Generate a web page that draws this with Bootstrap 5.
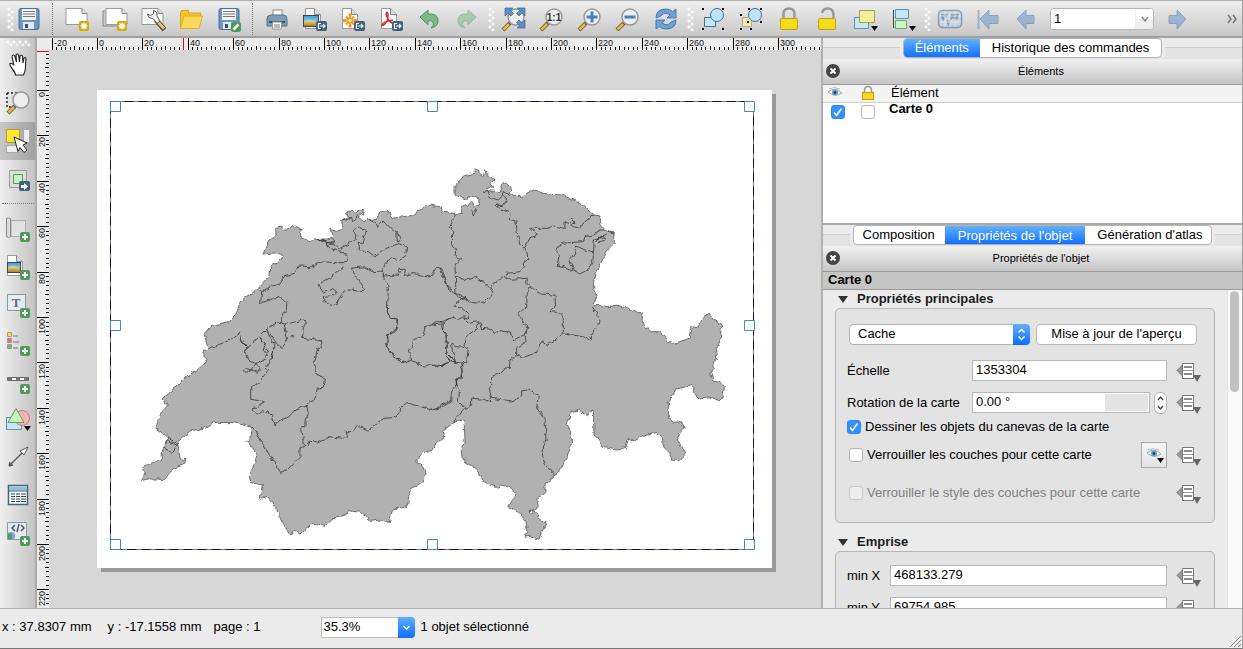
<!DOCTYPE html>
<html lang="fr">
<head>
<meta charset="utf-8">
<meta name="viewport" content="width=device-width, initial-scale=1">
<title>Composeur d'impression</title>
<link href="https://cdn.jsdelivr.net/npm/bootstrap@5.3.0/dist/css/bootstrap.min.css" rel="stylesheet">
<style>
body{font:13px/16px "Liberation Sans",Arial,sans-serif;color:#000;background:#ebebeb;height:100vh;overflow:hidden;border-right:1px solid #a0a0a0;border-bottom:1px solid #777}
button,input,select{font:inherit;color:inherit}
button{border:0;background:none;padding:0}
h2{font:inherit;margin:0}
.topbar{height:38px;border-top:1px solid #b0b0b0;border-bottom:2px solid #a0a0a0;background:linear-gradient(#eee,#c8c8c8)}
.tool{width:38px;height:34px;flex:none;display:flex;align-items:center;justify-content:center}
.ico{width:26px;height:26px;display:block;overflow:visible}
.faded{opacity:.5}
.grip{flex:none;width:9px;height:24px;background:radial-gradient(circle at 2px 2px,#fafafa 1px,transparent 2px) 2px 0/8px 6px repeat-y,radial-gradient(circle at 2px 2px,#f6f6f6 1px,transparent 2px) 5px 3px/8px 6px repeat-y}
.grip-start{margin:0 -4px 0 5px}
.grip-h{height:6px;width:24px;background:radial-gradient(circle at 2px 2px,#fafafa 1px,transparent 2px) 0 0/6px 8px repeat-x,radial-gradient(circle at 2px 2px,#f6f6f6 1px,transparent 2px) 3px 3px/6px 8px repeat-x;flex:none}
.sep{flex:none;width:10px;height:32px;border-left:1px dotted #777;margin-left:4px;margin-right:-4px}
.pagebox{width:104px;height:22px;margin:0 5px;border:1px solid #b4b4b4;border-radius:4px;background:#fff;overflow:hidden}
.pagebox input{border:0;min-width:0;flex:1;padding:0 3px;outline:0}
.pagebox button{width:18px;background:linear-gradient(#fff 50%,#efefef 50%);border-left:1px solid #eee}
.sidebar{width:37px;flex:none;background:linear-gradient(90deg,#efefef,#c4c4c4);border-right:2px solid #aaa;padding-top:2px}
.sidebar .tool{width:36px;height:38px}
.sidebar .tool.picked{background:linear-gradient(90deg,#c8c8c8,#a0a0a0)}
.sep-h{width:32px;border-top:1px dotted #777;margin:5px 0 6px;flex:none}
.ruler{background:#ececec;display:block;flex:none}
.ruler text{font-size:9px;fill:#111}
.workspace{background:#d7d7d7;min-width:0}
.paper{display:block;flex:none;margin:40px 0 0 48px}
.dock{width:421px;flex:none;border-left:2px solid #b0b0b0}
.tabstrip{height:21px;position:relative;background:linear-gradient(#ebebeb 9px,#cfcfcf 9px,#cfcfcf 10px,#e3e3e3 10px)}
.tabgroup{height:20px;border:1px solid #b4b4b4;border-radius:4px;background:#fff;overflow:hidden;box-shadow:3px 0 #ebebeb,-3px 0 #ebebeb}
.tabgroup button{padding:0 12px 1px 12px;height:19px}
.tabgroup button.on{color:#fff;background:linear-gradient(#60b0fc,#0f6dff);padding:0 11px 1px}
.dockhead{height:26px;font-size:11px;background:linear-gradient(#f0f0f0,#c6c6c6);border-bottom:1px solid #999;flex:none;padding-bottom:2px}
.dockhead svg{width:14px;height:14px;display:block}
.items{height:140px;flex:none;background:#fff;border-bottom:2px solid #aaa}
.items table{width:100%;table-layout:fixed;border-collapse:collapse}
.items th{background:#f4f4f4;height:17px;border-bottom:1px solid #ccc;font-weight:400;padding:0;line-height:16px}
.items td{padding:0;height:20px}
.items td:last-child{vertical-align:top;padding-left:2px;line-height:12px}
.tick{appearance:none;width:14px;height:14px;margin:0;border:1px solid #b4b4b4;border-radius:3px;background:#fff;flex:none;display:block}
.tick:checked{border-color:#2b87fb;background:#3391fd url("data:image/svg+xml,%3Csvg xmlns='http://www.w3.org/2000/svg' viewBox='0 0 12 12'%3E%3Cpath d='M2 6.500l2.500 3 5-7' fill='none' stroke='%23fff' stroke-width='1.600'/%3E%3C/svg%3E")}
.tick:disabled{background:#eee;border-color:#c8c8c8}
.objname{height:18px;background:#c6c6c6;border-bottom:1px solid #999;line-height:16px;padding-left:5px;flex:none}
.props{min-height:0;overflow:hidden}
.propcol{padding:0 12px;min-width:0}
.secthead{height:18px;font-weight:700;color:#1c1c1c;gap:8px;padding-left:2px}
.secthead svg{width:12px;height:8px}
.secthead+.box{margin-bottom:10px}
.box{border:1px solid #b6b6b6;border-radius:5px;background:#e3e3e3;padding:15px 12px 19px 11px}
.rowline{display:flex;align-items:center;height:21px}
.rowline label{line-height:16px}
.lab{width:125px;flex:none}
.field{border:1px solid #b8b8b8;background:#fff;height:21px;min-width:0;flex:1;padding:0 3px 2px;outline:0;border-radius:0}
.field-bar{background:linear-gradient(90deg,#fff 75%,#e3e3e3 75%);box-shadow:inset 0 0 0 1px #fff}
.ddbtn{width:26px;height:24px;margin-left:9px;flex:none}
.ddbtn svg{width:26px;height:24px;display:block}
.combo{position:relative;height:21px}
.combo select{appearance:none;width:100%;height:21px;border:1px solid #b4b4b4;border-radius:4px;background:#fff;padding:0 8px 2px}
.combo .cap{position:absolute;right:0;top:0;width:17px;height:21px;border-radius:0 4px 4px 0;background:linear-gradient(#5fb0fc,#0f6dff);pointer-events:none}
.combo .cap svg{display:block;width:17px;height:21px}
.whitebtn{height:21px;width:161px;border:1px solid #b8b8b8;border-radius:4px;background:#fff;margin:0 5px 0 6px;padding-bottom:2px}
.spin{width:13px;height:22px;margin-left:4px;border:1px solid #b4b4b4;border-radius:6px;background:#fff;flex:none}
.spin svg{display:block;width:11px;height:20px}
.eyebtn{width:26px;height:26px;border:1px solid #aaa;background:linear-gradient(#f6f6f6,#e4e4e4);flex:none}
.eyebtn svg{width:24px;height:24px;display:block}
.track{width:15px;flex:none;background:#fafafa;border-left:1px solid #e4e4e4;padding:1px 2px 0}
.thumb{width:9px;height:101px;border-radius:5px;background:#c1c1c1}
.status{height:40px;flex:none;border-top:1px solid #b0b0b0;padding:0 0 3px 2px;position:relative}
.zoombox{width:94px;margin:0 6px 0 60px}
.zoombox select{border-radius:0 4px 4px 0;border-color:#bbb;padding:0 2px}
.sizer{position:absolute;right:0;bottom:0;width:14px;height:14px}
</style>
</head>
<body class="d-flex flex-column">

<svg width="0" height="0" class="position-absolute" aria-hidden="true">
<defs>
<linearGradient id="sky" x2="0" y2="1"><stop offset="0" stop-color="#2f9de0"/><stop offset="1" stop-color="#d8f0fb"/></linearGradient>
<linearGradient id="sand" x2="0" y2="1"><stop offset="0" stop-color="#f3dc8a"/><stop offset="1" stop-color="#a8802c"/></linearGradient>
<g id="badgeNew"><rect x="15" y="15" width="10" height="10" rx="2" fill="#d6a900"/><path d="M20 16.500v7M16.500 20h7M17.500 17.500l5 5M22.500 17.500l-5 5" stroke="#fff" stroke-width="1.300"/></g>
<g id="badgeAdd"><rect x="15" y="16" width="10" height="10" rx="2" fill="#4f9a58"/><path d="M20 18v6M17 21h6" stroke="#fff" stroke-width="2"/></g>
<g id="badgeOut"><rect x="14" y="15" width="11" height="10" rx="2" fill="#3d637f"/><path d="M19 17.500h-2.500v5H19M18 20h5M21 18l2 2-2 2" fill="none" stroke="#fff" stroke-width="1.200"/></g>
<g id="sheet"><path d="M2 2.500h16l5 5v11H2z" fill="#fff" stroke="#999"/><path d="M18 2.500v5h5" fill="#ddd" stroke="#888"/></g>
<g id="doc"><path d="M5.500 2.500h9l6 6v14h-15z" fill="#fff" stroke="#999"/><path d="M14.500 2.500v6h6" fill="#ddd" stroke="#888"/></g>
<g id="lens"><path d="M9 17l-7 7" stroke="#555" stroke-width="4"/><path d="M8 18l-5.500 5.500" stroke="#f2b92a" stroke-width="2.500"/><circle cx="15" cy="11" r="8" fill="#eee" stroke="#999" stroke-width="1.500"/></g>
<symbol id="save" viewBox="0 0 26 26"><rect x="3" y="2.500" width="20" height="21" rx="2" fill="#6d96c4" stroke="#4a6c96"/><rect x="6" y="3" width="14" height="11" fill="#f4f4f4"/><path d="M7 5.500h12M7 8h12M7 10.500h12" stroke="#777"/><rect x="7" y="16" width="11" height="7" fill="#e4e8ec"/><rect x="9" y="18" width="3" height="4" fill="#37506e"/></symbol>
<symbol id="saveas" viewBox="0 0 26 26"><use href="#save"/><rect x="15" y="16" width="10" height="10" rx="2" fill="#4f9a58"/><path d="M17.500 23.500l5-5" stroke="#fff" stroke-width="2.500"/></symbol>
<symbol id="new" viewBox="0 0 26 26"><use href="#sheet"/><use href="#badgeNew"/></symbol>
<symbol id="dup" viewBox="0 0 26 26"><path d="M1 5h19v15H1z" fill="#ccc" stroke="#888"/><use href="#sheet" x="2"/><use href="#badgeNew"/></symbol>
<symbol id="manage" viewBox="0 0 26 26"><use href="#sheet"/><path d="M16 14l8.500 9.500" stroke="#444" stroke-width="5"/><path d="M17 15l7 7.500" stroke="#e2c56a" stroke-width="3"/><path d="M13.500 4.500q4 1 3.500 5.500l3 5-3 2.500-4-5q-5 0-5.500-4.500l3 1.500 3-2z" fill="#f2f2f2" stroke="#555"/></symbol>
<symbol id="open" viewBox="0 0 26 26"><path d="M2.500 23V6h1V4.500h7V7h12v5" fill="#f0c330" stroke="#d8a51c"/><path d="M2.500 22.500L6 10h18.500L21 22.500z" fill="#fbd95a" stroke="#dfae25"/></symbol>
<symbol id="print" viewBox="0 0 26 26"><rect x="9" y="4" width="9" height="8" fill="#fff" stroke="#888"/><path d="M3 13q0-4 4-4h12q4 0 4 4v7H3z" fill="#7b9cb6" stroke="#4f7089"/><path d="M5 16h16" stroke="#35536b" stroke-width="2"/><path d="M8.500 16h9v7h-9z" fill="#fff" stroke="#999"/><path d="M10 19h6M10 21h6" stroke="#777"/></symbol>
<symbol id="outimg" viewBox="0 0 26 26"><use href="#doc" x="-2"/><rect x="1.500" y="9.500" width="15" height="11" fill="url(#sky)" stroke="#445"/><path d="M2 15q8-2 14 1v4H2z" fill="url(#sand)"/><use href="#badgeOut"/></symbol>
<symbol id="outsvg" viewBox="0 0 26 26"><use href="#doc" x="-3"/><g stroke="#f29a1d" stroke-width="2"><path d="M10 9v11M4.500 14.500h11M6 10.500l8 8M14 10.500l-8 8"/></g><circle cx="10" cy="14.500" r="2" fill="#fff" stroke="#f29a1d"/><g fill="#f29a1d"><circle cx="10" cy="9" r="1.700"/><circle cx="10" cy="20" r="1.700"/><circle cx="4.500" cy="14.500" r="1.700"/><circle cx="15.500" cy="14.500" r="1.700"/></g><use href="#badgeOut"/></symbol>
<symbol id="outpdf" viewBox="0 0 26 26"><use href="#doc" x="-2"/><path d="M9 6q-2 2 1 7 3 5 7 4M10 13q-3 7-6 6 0-3 11-5M9 6q2 1 0 10" fill="none" stroke="#d0302b" stroke-width="1.500"/><use href="#badgeOut"/></symbol>
<symbol id="undo" viewBox="0 0 26 26"><path d="M4 11l8-7v4q11-1 10 8-1 5-7 6 4-4 2-6t-5-1v4z" fill="#80b58a" stroke="#4f9560"/></symbol>
<symbol id="redo" viewBox="0 0 26 26"><path d="M22 11l-8-7v4q-11-1-10 8 1 5 7 6-4-4-2-6t5-1v4z" fill="#80b58a" stroke="#4f9560"/></symbol>
<symbol id="zfull" viewBox="0 0 26 26"><use href="#lens"/><g fill="#5e8dc0" stroke="#3b6796" stroke-width=".7"><path d="M4 2h8L9.500 4.500l3 3-2.500 2.500-3-3L4 10z"/><path d="M24 2h-8l2.500 2.500-3 3L18 10l3-3 3 3z"/><path d="M24 22h-8l2.500-2.500-3-3L18 14l3 3 3-3z"/></g></symbol>
<symbol id="zone" viewBox="0 0 26 26"><use href="#lens"/><text x="15" y="15" font-size="10" font-weight="700" text-anchor="middle" fill="#333">1:1</text></symbol>
<symbol id="zin" viewBox="0 0 26 26"><use href="#lens"/><path d="M15 5.500v11M9.500 11h11" stroke="#4b81b8" stroke-width="3"/></symbol>
<symbol id="zout" viewBox="0 0 26 26"><use href="#lens"/><path d="M9.500 11h11" stroke="#4b81b8" stroke-width="3"/></symbol>
<symbol id="refresh" viewBox="0 0 26 26"><path d="M3 12Q3 3 13 3q4 0 6.500 2.500L23 3v9h-9l3-3q-6-4-9 1z" fill="#6fa0d6" stroke="#4679b2"/><path d="M23 14q0 9-10 9-4 0-6.500-2.500L3 23v-9h9l-3 3q6 4 9-1z" fill="#6fa0d6" stroke="#4679b2"/></symbol>
<symbol id="group" viewBox="0 0 26 26"><path d="M4.500 11.500h11v9h-11z" fill="#c8e6f8" stroke="#3c7396"/><circle cx="17" cy="9" r="6.500" fill="#c0e2f6" stroke="#3c7396"/><path d="M2 2h2v2H2zM22 2h2v2h-2zM2 22h2v2H2zM22 22h2v2h-2z"/></symbol>
<symbol id="ungroup" viewBox="0 0 26 26"><path d="M4.500 11.500h9v9h-9z" fill="#f2ee9c" stroke="#aaa"/><circle cx="17" cy="9" r="6.500" fill="#c0e2f6" stroke="#3c7396"/><path d="M10 2h2v2h-2zM22 2h2v2h-2zM2 8h2v2H2zM9 15h2v2H9zM22 15h2v2h-2zM2 22h2v2H2zM12 22h2v2h-2z"/></symbol>
<symbol id="lock" viewBox="0 0 26 26"><path d="M7.500 13V8q0-5.500 5.500-5.500T18.500 8v5" fill="none" stroke="#999" stroke-width="2.500"/><rect x="4.500" y="12.500" width="17" height="11" rx="1" fill="#f2dc1c" stroke="#c69d10"/></symbol>
<symbol id="unlock" viewBox="0 0 26 26"><path d="M8 7q1-4.500 6-4.500t5.500 5.500v5" fill="none" stroke="#999" stroke-width="2.500"/><rect x="4.500" y="12.500" width="17" height="11" rx="1" fill="#f2dc1c" stroke="#c69d10"/></symbol>
<symbol id="raise" viewBox="0 0 26 26"><path d="M2.500 11.500h14v11h-14z" fill="#c8e6f8" stroke="#5b93b4"/><path d="M7.500 4.500h15v12h-15z" fill="#f2ee9c" stroke="#aaa04a"/><path d="M19 20h7l-3.500 5z"/></symbol>
<symbol id="align" viewBox="0 0 26 26"><path d="M3.500 4v18" stroke="#444"/><path d="M5.500 3.500h13v9h-13z" fill="#c8e6f8" stroke="#5b93b4"/><path d="M5.500 14.500h11v8h-11z" fill="#c9f8c4" stroke="#68ad66"/><path d="M19 20h7l-3.500 5z"/></symbol>
<symbol id="atlas" viewBox="0 0 26 26"><rect x="1.500" y="4.500" width="23" height="17" rx="4" fill="#b9cfe8" stroke="#2f5c90" stroke-width="1.500"/><path d="M4 8h7l-1 3H8l-1 4-3-3zM13 8h9l-1 5-3 1-2-2-3 3zM10 14l3 1-1 5-2-2z" fill="#34587f"/><path d="M8 5v16M13 5v16M18 5v16M2 10h22M2 16h22" stroke="#fff" stroke-width=".7"/></symbol>
<symbol id="first" viewBox="0 0 26 26"><path d="M3.500 4v19" stroke="#5d88b7" stroke-width="2"/><path d="M5 13l9-9v5.500h9v8h-9V23z" fill="#5f90c8" stroke="#3d6ca1"/></symbol>
<symbol id="prev" viewBox="0 0 26 26"><path d="M4 13l9-9v5.500h8v8h-8V23z" fill="#5f90c8" stroke="#3d6ca1"/></symbol>
<symbol id="next" viewBox="0 0 26 26"><path d="M21 13l-9-9v5.500H4v8h8V23z" fill="#5f90c8" stroke="#3d6ca1"/></symbol>
<symbol id="hand" viewBox="0 0 26 26"><path d="M9 19Q4 13 5 11.500q2-1 4 2L7 5q0-2 1.500-2T10 5l1.500 5L11 3q1-2 2.500 0l1 7 .5-6q1.500-1.500 2.500 0l.5 7 1-5q2-1 2 1-.5 4-.5 8t-2 8h-8q0-2-2-4z" fill="#fff" stroke="#222" stroke-width="1.100"/></symbol>
<symbol id="zoomsel" viewBox="0 0 26 26"><path d="M2 3h14M2 3v14h14" fill="none" stroke="#222" stroke-width="1.500" stroke-dasharray="2 2"/><g transform="translate(1 -1)"><use href="#lens"/></g></symbol>
<symbol id="pick" viewBox="0 0 26 26"><path d="M18.500 1.500h6v13h-6zM1.500 17.500h13v7h-13z" fill="#eee" stroke="#aaa"/><path d="M1.500 1.500h13v13h-13z" fill="#fde735" stroke="#b89e22"/><path d="M9 9l13 6-4 2 4 5-3 2.500-4-5-2 4z" fill="#fff" stroke="#222"/></symbol>
<symbol id="movec" viewBox="0 0 26 26"><path d="M4.500 4.500h17v17h-17z" fill="#ddd" stroke="#999"/><path d="M8.500 8.500h9v9h-9z" fill="#c6f5c3" stroke="#5b9c5b"/><rect x="14" y="15" width="11" height="10" rx="2" fill="#3d637f"/><path d="M16 19h3v-2l4 3.500-4 3.500v-2h-3z" fill="#fff"/></symbol>
<symbol id="addmap" viewBox="0 0 26 26"><path d="M6 4.500h14.500v16H6z" fill="#e2e2e2" stroke="#aaa"/><path d="M1.500 2.500q2-1 4 0v18q-2 2-4 0z" fill="#ddd" stroke="#888"/><use href="#badgeAdd"/></symbol>
<symbol id="addimg" viewBox="0 0 26 26"><use href="#doc" x="-3" y="-1"/><rect x="2.500" y="8.500" width="13" height="10" fill="url(#sky)" stroke="#445"/><path d="M3 13q7-2 12 1v4H3z" fill="url(#sand)"/><use href="#badgeAdd"/></symbol>
<symbol id="addtxt" viewBox="0 0 26 26"><path d="M2.500 2.500h18v16h-18z" fill="#e4ebf2" stroke="#899"/><text x="11" y="15" font-size="13" font-weight="700" font-family="Liberation Serif,serif" text-anchor="middle" fill="#667">T</text><use href="#badgeAdd"/></symbol>
<symbol id="addleg" viewBox="0 0 26 26"><g stroke="#999"><path d="M2.500 2.500h4v4h-4z" fill="#f6e71c"/><path d="M2.500 8.500h4v4h-4z" fill="#e66"/><path d="M2.500 14.500h4v4h-4z" fill="#7b7"/></g><path d="M8 6h5M8 12h6M8 18h5" stroke="#999" stroke-width="1.500"/><use href="#badgeAdd"/></symbol>
<symbol id="addscale" viewBox="0 0 26 26"><path d="M2.500 9.500h21v3h-21z" fill="#fff" stroke="#666"/><path d="M3 11h4M11 11h4M19 11h4" stroke="#777" stroke-width="3"/><use href="#badgeAdd"/></symbol>
<symbol id="addshape" viewBox="0 0 26 26"><path d="M1.500 11.500h15v12h-15z" fill="#c8e6fb" stroke="#5b93b4"/><circle cx="17" cy="12" r="7.500" fill="#f8b3b3" stroke="#cf7777"/><path d="M11 2.500l8 14H3z" fill="#c4f5bc" stroke="#5ba35b"/><path d="M19 20h7l-3.500 5z"/></symbol>
<symbol id="addarrow" viewBox="0 0 26 26"><path d="M4 22L17 9M4 22l1-4M4 22l4-1" stroke="#555" stroke-width="1.300"/><path d="M23 3l-8 4 4 4z" fill="#fff" stroke="#555"/></symbol>
<symbol id="addtable" viewBox="0 0 26 26"><rect x="3.500" y="3.500" width="19" height="19" fill="#f4f8fa" stroke="#44657c" stroke-width="1.500"/><path d="M4 6.500h18" stroke="#8fc0de" stroke-width="4"/><path d="M4 9h18" stroke="#44657c"/><path d="M6 12h4M11 12h4M16 12h5M6 14.500h4M11 14.500h4M16 14.500h5M6 17h4M11 17h4M16 17h5M6 19.500h4M11 19.500h4M16 19.500h5" stroke="#345"/></symbol>
<symbol id="addhtml" viewBox="0 0 26 26"><path d="M2.500 2.500h19v17h-19z" fill="#e4ebf2" stroke="#899"/><path d="M10 5L7 8l3 3M16 5l3 3-3 3M14 4l-2 8" fill="none" stroke="#445" stroke-width="1.300"/><circle cx="6" cy="16" r="4" fill="#7aa3dd"/><path d="M3 14q4-2 4 2t-2 4q-3-2-2-6z" fill="#4ba04d"/><use href="#badgeAdd"/></symbol>
<symbol id="eye" viewBox="0 0 16 12"><path d="M1 5q7-6 14 1-7 5-14-1z" fill="#eef3f7" stroke="#9aa" /><circle cx="8" cy="5.500" r="3" fill="#6b9dc9"/><circle cx="8" cy="5.500" r="1.300" fill="#234"/><path d="M2 2q5-3 11 0" fill="none" stroke="#bbb"/></symbol>
<symbol id="minilock" viewBox="0 0 14 16"><path d="M3.500 8V5.500q0-4 3.500-4t3.500 4V8" fill="none" stroke="#999" stroke-width="1.600"/><rect x="1.500" y="7.500" width="11" height="7" fill="#f2dc1c" stroke="#c69d10"/></symbol>
<symbol id="ddef" viewBox="0 0 26 24"><path d="M6.500 6L1 11.500 6.500 17z" fill="#999" stroke="#777"/><path d="M6.500 4.500h11v15h-11z" fill="#fff" stroke="#777"/><path d="M8 8h8M8 15h8" stroke="#666" stroke-width="1.500"/><path d="M7 11.500h10" stroke="#999"/><path d="M17 16h8l-4 7z" fill="#666"/></symbol>
<symbol id="closer" viewBox="0 0 14 14"><circle cx="7" cy="7" r="7" fill="#444"/><path d="M4.500 4.500l5 5M9.500 4.500l-5 5" stroke="#fff" stroke-width="2"/></symbol>
<symbol id="tri" viewBox="0 0 12 8"><path d="M1 1h10L6 8z" fill="#333"/></symbol>
<filter id="coast" x="-2%" y="-2%" width="104%" height="104%" color-interpolation-filters="sRGB"><feTurbulence type="fractalNoise" baseFrequency=".06" numOctaves="2" seed="4"/><feDisplacementMap in="SourceGraphic" scale="14" xChannelSelector="R" yChannelSelector="G"/></filter>
</defs>
</svg>

<header class="topbar d-flex align-items-center flex-shrink-0" role="toolbar">
  <span class="grip grip-start"></span>
  <button class="tool" aria-label="Enregistrer"><svg class="ico"><use href="#save"/></svg></button>
  <span class="sep"></span>
  <button class="tool" aria-label="Nouveau"><svg class="ico"><use href="#new"/></svg></button>
  <button class="tool" aria-label="Dupliquer"><svg class="ico"><use href="#dup"/></svg></button>
  <button class="tool" aria-label="Gestionnaire"><svg class="ico"><use href="#manage"/></svg></button>
  <button class="tool" aria-label="Ouvrir"><svg class="ico"><use href="#open"/></svg></button>
  <button class="tool" aria-label="Enregistrer sous"><svg class="ico"><use href="#saveas"/></svg></button>
  <span class="sep"></span>
  <button class="tool" aria-label="Imprimer"><svg class="ico"><use href="#print"/></svg></button>
  <button class="tool" aria-label="Exporter image"><svg class="ico"><use href="#outimg"/></svg></button>
  <button class="tool" aria-label="Exporter SVG"><svg class="ico"><use href="#outsvg"/></svg></button>
  <button class="tool" aria-label="Exporter PDF"><svg class="ico"><use href="#outpdf"/></svg></button>
  <button class="tool" aria-label="Annuler"><svg class="ico"><use href="#undo"/></svg></button>
  <button class="tool faded" aria-label="Rétablir"><svg class="ico"><use href="#redo"/></svg></button>
  <span class="grip"></span>
  <button class="tool" aria-label="Zoom étendu"><svg class="ico"><use href="#zfull"/></svg></button>
  <button class="tool" aria-label="Zoom réel"><svg class="ico"><use href="#zone"/></svg></button>
  <button class="tool" aria-label="Zoom avant"><svg class="ico"><use href="#zin"/></svg></button>
  <button class="tool" aria-label="Zoom arrière"><svg class="ico"><use href="#zout"/></svg></button>
  <button class="tool" aria-label="Rafraîchir"><svg class="ico"><use href="#refresh"/></svg></button>
  <span class="grip"></span>
  <button class="tool" aria-label="Grouper"><svg class="ico"><use href="#group"/></svg></button>
  <button class="tool" aria-label="Dégrouper"><svg class="ico"><use href="#ungroup"/></svg></button>
  <button class="tool" aria-label="Verrouiller"><svg class="ico"><use href="#lock"/></svg></button>
  <button class="tool" aria-label="Déverrouiller"><svg class="ico"><use href="#unlock"/></svg></button>
  <button class="tool" aria-label="Relever"><svg class="ico"><use href="#raise"/></svg></button>
  <button class="tool" aria-label="Aligner"><svg class="ico"><use href="#align"/></svg></button>
  <span class="grip"></span>
  <button class="tool faded" aria-label="Atlas"><svg class="ico"><use href="#atlas"/></svg></button>
  <button class="tool faded" aria-label="Première page"><svg class="ico"><use href="#first"/></svg></button>
  <button class="tool faded" aria-label="Page précédente"><svg class="ico"><use href="#prev"/></svg></button>
  <div class="pagebox d-flex flex-shrink-0"><input type="text" value="1" aria-label="Page d'atlas"><button aria-label="Choisir la page"><svg width="10" height="8" viewBox="0 0 10 8"><path d="M2 2l3 4 3-4" fill="none" stroke="#888" stroke-width="1.500"/></svg></button></div>
  <button class="tool faded" aria-label="Page suivante"><svg class="ico"><use href="#next"/></svg></button>
  <button class="ms-auto pe-1" aria-label="Plus d'outils"><svg width="12" height="10" viewBox="0 0 12 10" class="d-block"><path d="M2 1l3 4-3 4M7 1l3 4-3 4" fill="none" stroke="#777" stroke-width="1.500"/></svg></button>
</header>

<main class="d-flex flex-fill" style="min-height:0">
  <nav class="sidebar d-flex flex-column align-items-center overflow-hidden" aria-label="Outils">
    <span class="grip-h"></span>
    <button class="tool" aria-label="Déplacer"><svg class="ico"><use href="#hand"/></svg></button>
    <button class="tool" aria-label="Zoom"><svg class="ico"><use href="#zoomsel"/></svg></button>
    <button class="tool picked" aria-label="Sélectionner"><svg class="ico"><use href="#pick"/></svg></button>
    <button class="tool" aria-label="Déplacer le contenu"><svg class="ico"><use href="#movec"/></svg></button>
    <span class="sep-h"></span>
    <button class="tool" aria-label="Ajouter carte"><svg class="ico"><use href="#addmap"/></svg></button>
    <button class="tool" aria-label="Ajouter image"><svg class="ico"><use href="#addimg"/></svg></button>
    <button class="tool" aria-label="Ajouter étiquette"><svg class="ico"><use href="#addtxt"/></svg></button>
    <button class="tool" aria-label="Ajouter légende"><svg class="ico"><use href="#addleg"/></svg></button>
    <button class="tool" aria-label="Ajouter échelle"><svg class="ico"><use href="#addscale"/></svg></button>
    <button class="tool" aria-label="Ajouter forme"><svg class="ico"><use href="#addshape"/></svg></button>
    <button class="tool" aria-label="Ajouter flèche"><svg class="ico"><use href="#addarrow"/></svg></button>
    <button class="tool" aria-label="Ajouter table"><svg class="ico"><use href="#addtable"/></svg></button>
    <button class="tool" aria-label="Ajouter HTML"><svg class="ico"><use href="#addhtml"/></svg></button>
  </nav>

  <section class="workspace d-flex flex-column flex-fill overflow-hidden">
    <svg id="hruler" class="ruler" width="100%" height="12"></svg>
    <div class="d-flex flex-fill overflow-hidden">
      <svg id="vruler" class="ruler" width="12" height="100%"></svg>
      <svg class="paper" width="680" height="483" viewBox="97 90 680 483" role="img" aria-label="Carte de la Suisse">
        <path d="M101 94h675v478H101z" fill="#999"/>
        <path d="M97 90h675v478H97z" fill="#fff"/>
        <g transform="scale(.33333)" stroke="#555" stroke-width="2.400" stroke-linejoin="round" fill="none" filter="url(#coast)">
          <path fill="#b1b1b1" d="M425 1445L435 1417 428 1400 450 1390 485 1382 483 1360 495 1335 508 1315 468 1285 475 1255 488 1233 502 1218 487 1195 520 1170 553 1135 595 1107 620 1085 612 1072 612 1055 623 1045 613 1000 633 977 662 970 685 965 705 945 720 910 735 895 760 880 785 855 810 828 812 798 838 785 852 770 840 758 787 762 800 738 810 720 828 708 827 685 845 681 850 688 870 685 885 678 905 687 898 712 930 723 960 717 982 717 1000 708 992 687 1010 695 1028 685 1025 660 1045 650 1036 640 1050 633 1070 640 1075 630 1090 628 1088 642 1075 650 1092 662 1130 655 1142 635 1170 635 1178 655 1210 650 1245 645 1252 633 1265 628 1288 615 1320 620 1330 637 1365 640 1385 637 1385 620 1405 615 1415 605 1424 610 1422 622 1438 615 1435 592 1418 590 1400 598 1365 585 1365 560 1378 545 1390 528 1422 520 1423 507 1440 512 1441 528 1448 528 1455 512 1468 528 1474 536 1485 538 1470 550 1478 565 1465 562 1462 572 1505 575 1502 555 1512 547 1538 565 1525 578 1542 590 1565 588 1595 572 1650 583 1685 585 1740 608 1780 645 1800 648 1803 675 1817 692 1840 695 1838 712 1847 730 1830 745 1820 755 1810 778 1788 820 1780 850 1782 870 1790 890 1777 918 1802 916 1824 920 1850 916 1885 925 1910 938 1930 938 1926 960 1932 980 1955 995 1980 995 2005 1023 2025 1030 2068 1015 2072 980 2095 983 2110 950 2128 940 2140 960 2165 972 2160 1025 2148 1055 2150 1075 2138 1095 2145 1105 2132 1120 2140 1145 2160 1145 2173 1160 2168 1195 2160 1203 2135 1193 2100 1197 2080 1177 2082 1160 2075 1153 2052 1162 2025 1168 2020 1185 2005 1205 2005 1255 2020 1267 2045 1265 2052 1285 2040 1298 2032 1320 2058 1360 2042 1378 2012 1382 2010 1360 1990 1340 1987 1310 1970 1298 1940 1302 1900 1320 1885 1315 1878 1342 1850 1350 1810 1342 1798 1318 1782 1305 1780 1230 1768 1238 1760 1252 1742 1230 1710 1235 1708 1255 1698 1270 1712 1295 1715 1330 1700 1375 1675 1418 1665 1425 1635 1452 1635 1480 1610 1495 1615 1520 1605 1535 1618 1555 1640 1572 1625 1595 1618 1618 1590 1608 1575 1612 1583 1595 1578 1565 1560 1540 1525 1520 1548 1485 1535 1465 1505 1455 1493 1463 1455 1450 1440 1425 1425 1402 1388 1380 1383 1355 1395 1330 1394 1295 1392 1265 1380 1260 1362 1268 1328 1292 1335 1308 1305 1335 1295 1352 1268 1355 1247 1380 1268 1400 1278 1420 1272 1445 1230 1467 1228 1500 1215 1522 1180 1527 1167 1567 1145 1560 1125 1562 1108 1565 1102 1550 1080 1537 1045 1532 1040 1545 1010 1550 975 1580 955 1572 938 1570 920 1584 900 1602 885 1593 868 1602 855 1580 845 1560 832 1535 830 1522 800 1487 780 1498 787 1455 752 1448 748 1430 762 1390 775 1365 740 1323 752 1315 758 1283 700 1268 640 1267 610 1285 570 1293 530 1325 538 1355 540 1375 550 1382 558 1377 555 1392 525 1405 510 1417 495 1440 475 1437 450 1437z"/>
          <g transform="translate(720 480)" stroke="#333">
            <path d="M232 237l23 8 23-10 5 5-5 10h-21zM245 240l17 15 8 10 15 5 23 5 17 20-10 13-35 0-30-3-35 15-37-2-13 22-30 7-20 28-20 3-30 17-8-7"/>
            <path d="M257 250l28 5 15 10 25-13 20-12 3-14-6-10 3-9 17-3 16 8-8 38-15 0v22l30 3 20 15 35-25 35-15 25 12-5 28-15 10-25-7-20 17-7 23-28 2-28-15-37 5 5 20 15 10 17 30-2 10-40-5-18 3-17 27-5 17-15-5-23-7-2-13 25-2 15-15-13-10-25 15-18-25 33-20 30-23 15-17"/>
            <path d="M385 178l23 12 4 12 20-19 23 25 15 7 2 30 13-3-5-17-10-3M428 333l4 22 13 30-3 70 13 20 17 5-7 30-23 20-2 30 15 20 20 18M428 348l47-3 5-20 15 5v17l25-10 40 13 10 0 20-28 15 3 20 55 23 23M308 180l27-8 3 16 17-23"/>
            <path d="M65 395l-3 35 30-12 28-8 20 20v20l-15 10v30M12 575l68-67 30-20 25 5 55-13 10 5-10 15-2 35 52 7 5 18-15 5 5 10M133 493l10 47-18 25-15-15-30-42M60 532l15 18-3 15 10 5-7 30M80 512l15 33 10 5-5 25-8 25M0 515l5 30 17 17-10 13"/><circle cx="157" cy="530" r="4"/>
          </g>
          <g transform="translate(1320 480)" stroke="#333">
            <path d="M48 162L28 200 38 215 37 260 50 270 48 292 62 295 45 318 48 400 75 410M0 325L30 395 48 402 55 412 75 413 85 425 110 430 135 425 155 400 155 385M48 348L75 360 110 352 130 365 150 385 160 370 195 350 200 340 240 335 252 322 250 310 263 298 262 280 250 265 240 255 235 235 232 225 228 182 208 178 210 160 180 145 168 135 190 137 200 120 188 105M130 95L145 92 150 112 175 120 185 110 190 95 210 108"/>
            <path d="M250 265L268 235 292 225 272 205 325 205 340 198 375 205 375 187 385 190 395 177 405 190 393 190 402 200 418 205 435 185 460 165M520 220L500 210 475 210 470 222 435 230 430 245 365 250 348 270 356 290 352 318 375 325 400 332 420 342 445 328 458 310 463 240 500 222M468 238L490 228 495 240 475 248zM472 232L500 236M410 258L403 280 390 300 402 332M410 258L435 270 460 275M95 150L100 168 110 145"/>
            <path d="M195 350L205 358 262 355 260 370 272 380 262 400 260 440 235 460 250 490 263 500 258 522 220 540 210 515 195 515 180 512 162 520 155 508 125 505 118 485M272 380L300 402 345 405 347 440 330 455 362 458 370 475 370 520 345 540 320 555 305 545 285 580 250 592 230 585 230 565 258 545 255 520M370 522L430 530 450 540 462 510 482 482 457 440M230 585L210 600 208 625 190 628 180 640 155 650 155 675 148 685 155 715"/>
            <path d="M75 413L60 418 42 440 65 445 88 465 85 475 72 470 55 478 40 472 20 480 0 485M70 475L85 490 118 485 105 510 80 528 75 535 72 558 85 565 80 608 50 608 22 580 22 520 8 515 5 495M35 552L50 560 72 562M35 555L38 580 50 608M62 610L68 650 50 655 50 680M0 620L30 605 50 608"/>
          </g>
          <g transform="translate(390 930)" stroke="#333">
            <path d="M233 115L265 105 300 90 330 67 335 90 345 105 355 112M342 125L360 155 385 160 405 148 412 135 403 125 405 100 390 82M432 100L430 130 415 160 408 170 415 180 385 220 362 232 362 268 375 270 400 275 385 292 368 292 368 300 382 315 400 302 425 312 435 348 450 330 475 322 495 300 525 290 555 265 562 235 580 232 583 205 557 190 553 160 562 120M365 180L380 162 392 175 385 187 365 180 350 190 343 182 352 175z"/>
            <path d="M530 285L535 310 525 335 525 350 515 350 517 370 523 400 523 408 510 415 510 440 485 465 470 482 452 487 430 455 395 395 375 360 368 353M523 408L535 407 540 393 560 400 600 380 640 385 650 375 645 365 670 365 680 347 715 360 765 325 790 322 810 310 812 295 830 278 900 298 930 290 960 272"/>
            <path d="M770 0L785 27 803 32 797 65 772 75 775 90 767 100 770 115 815 158 840 150 880 168 905 163 930 170 960 150M845 150L838 120 850 110 848 90 860 85 880 75 885 50 905 45 940 42 937 65 948 70 950 140 960 150M905 43L920 35 945 37 960 25M115 385L143 400 128 430 100 412zM115 395L140 405"/>
          </g>
          <g transform="translate(1290 1020)" stroke="#333">
            <path d="M0 72L20 73 35 80 60 62 75 70 95 68 97 115 78 120 80 135 65 155 62 185 35 203 0 210M80 135L88 155 85 185 105 203 85 225 75 235 72 248M105 205L125 195 125 175 165 178 180 185 185 175 245 183 275 170 275 152 300 150 325 165 320 205 345 235 348 300 335 335 345 375 375 403"/><ellipse cx="305" cy="513" rx="4" ry="6" fill="#fff"/>
          </g>
        </g>
        <g fill="none"><path d="M110.500 101.500h643v448h-643z" stroke="#3b8ac4"/><path d="M110.500 101.500h643v448h-643z" stroke="#400018" stroke-dasharray="9 5"/></g>
        <g fill="#fff" stroke="#3b8ac4"><path d="M110.500 101.500h10v10h-10zM427.500 101.500h10v10h-10zM744.500 101.500h10v10h-10zM110.500 320.500h10v10h-10zM744.500 320.500h10v10h-10zM110.500 539.500h10v10h-10zM427.500 539.500h10v10h-10zM744.500 539.500h10v10h-10z"/></g>
      </svg>
    </div>
  </section>

  <aside class="dock d-flex flex-column">
    <div class="tabstrip d-flex justify-content-center flex-shrink-0"><div class="tabgroup d-flex" role="tablist"><button class="on" role="tab">Éléments</button><button role="tab">Historique des commandes</button></div></div>
    <div class="dockhead d-flex align-items-center"><button style="margin-left:3px" aria-label="Fermer"><svg><use href="#closer"/></svg></button><h2 class="flex-fill text-center">Éléments</h2></div>
    <div class="items"><table>
      <colgroup><col style="width:30px"><col style="width:34px"><col></colgroup>
      <thead><tr><th><svg width="16" height="12" class="d-block ms-1"><use href="#eye"/></svg></th><th><svg width="14" height="16" class="d-block ms-2"><use href="#minilock"/></svg></th><th class="ps-1">Élément</th></tr></thead>
      <tbody><tr><td><input type="checkbox" class="tick ms-2" checked aria-label="Visible"></td><td><input type="checkbox" class="tick ms-2" aria-label="Verrouillé"></td><td><b>Carte 0</b></td></tr></tbody>
    </table></div>
    <div class="tabstrip d-flex justify-content-center flex-shrink-0"><div class="tabgroup d-flex" role="tablist"><button role="tab" style="padding-left:9px;padding-right:10px">Composition</button><button class="on" role="tab" style="padding:0 13px">Propriétés de l'objet</button><button role="tab" style="padding-right:9px">Génération d'atlas</button></div></div>
    <div class="dockhead d-flex align-items-center"><button style="margin-left:3px" aria-label="Fermer"><svg><use href="#closer"/></svg></button><h2 class="flex-fill text-center">Propriétés de l'objet</h2></div>
    <div class="objname"><b>Carte 0</b></div>
    <div class="props d-flex flex-fill">
      <div class="propcol flex-fill">
        <h2 class="secthead d-flex align-items-center"><svg><use href="#tri"/></svg>Propriétés principales</h2>
        <div class="box">
          <div class="rowline" style="margin:0 0 15px 2px"><div class="combo flex-fill"><select aria-label="Prévisualisation"><option>Cache</option></select><span class="cap"><svg viewBox="0 0 17 21"><path d="M5.500 8.500l3-3 3 3M5.500 12.500l3 3 3-3" fill="none" stroke="#fff" stroke-width="1.500"/></svg></span></div><button class="whitebtn">Mise à jour de l'aperçu</button></div>
          <div class="rowline" style="margin-bottom:11px"><label class="lab" for="ech">Échelle</label><input class="field" id="ech" value="1353304"><button class="ddbtn" aria-label="Valeur définie"><svg><use href="#ddef"/></svg></button></div>
          <div class="rowline" style="margin-bottom:6px"><label class="lab" for="rot">Rotation de la carte</label><input class="field field-bar" id="rot" value="0.00 °"><button class="spin" aria-label="Ajuster"><svg viewBox="0 0 11 20"><path d="M3 7l2.500-3L8 7M3 13l2.500 3L8 13" fill="none" stroke="#444" stroke-width="1.300"/></svg></button><button class="ddbtn" aria-label="Valeur définie"><svg><use href="#ddef"/></svg></button></div>
          <div class="rowline" style="height:16px;margin-bottom:7px"><input type="checkbox" class="tick me-1" id="c1" checked><label for="c1">Dessiner les objets du canevas de la carte</label></div>
          <div class="rowline" style="height:26px;margin:0 0 14px 2px"><input type="checkbox" class="tick me-1" id="c2"><label for="c2" class="flex-fill">Verrouiller les couches pour cette carte</label><button class="eyebtn" aria-label="Visibilité"><svg viewBox="0 0 24 24"><use href="#eye" x="4" y="5" width="16" height="12"/><path d="M15 15h7l-3.500 5z"/></svg></button><button class="ddbtn" aria-label="Valeur définie"><svg><use href="#ddef"/></svg></button></div>
          <div class="rowline" style="margin-left:2px"><input type="checkbox" class="tick me-1" id="c3" disabled><label for="c3" class="flex-fill" style="color:#808080">Verrouiller le style des couches pour cette carte</label><button class="ddbtn" aria-label="Valeur définie"><svg><use href="#ddef"/></svg></button></div>
        </div>
        <h2 class="secthead d-flex align-items-center"><svg><use href="#tri"/></svg>Emprise</h2>
        <div class="box" style="padding-top:13px">
          <div class="rowline" style="margin-bottom:11px"><label style="width:43px" for="mx">min X</label><input class="field" id="mx" value="468133.279"><button class="ddbtn" aria-label="Valeur définie"><svg><use href="#ddef"/></svg></button></div>
          <div class="rowline"><label style="width:43px" for="my">min Y</label><input class="field" id="my" value="69754.985"><button class="ddbtn" aria-label="Valeur définie"><svg><use href="#ddef"/></svg></button></div>
        </div>
      </div>
      <div class="track"><div class="thumb"></div></div>
    </div>
  </aside>
</main>

<footer class="status d-flex align-items-center">
  <span>x : 37.8307 mm</span><span class="ms-3">y : -17.1558 mm</span><span style="margin-left:12px">page : 1</span>
  <div class="combo zoombox"><select aria-label="Zoom"><option>35.3%</option></select><span class="cap"><svg viewBox="0 0 17 21"><path d="M5.500 9l3 3 3-3" fill="none" stroke="#fff" stroke-width="1.500"/></svg></span></div>
  <span>1 objet sélectionné</span>
  <svg class="sizer" viewBox="0 0 14 14"><path d="M2 13L13 2M6 13l7-7M10 13l3-3" stroke="#888"/></svg>
</footer>

<script src="https://cdn.jsdelivr.net/npm/bootstrap@5.3.0/dist/js/bootstrap.bundle.min.js"></script>
<script>
// Millimetre rulers: one tick every 2 mm, a labelled one every 20 mm.
const PX = 2.27;
function fill(id, zero, from, to, vertical, cursor) {
  let s = '';
  for (let mm = from; mm <= to; mm += 2) {
    const p = Math.round(zero + mm * PX), big = mm % 20 === 0;
    if (p < 0) continue;
    const a = big ? 0 : mm % 10 === 0 ? 8 : 9;
    s += vertical ? `<path d="M${a} ${p}.5H12" stroke="#000"/>` : `<path d="M${p}.5 ${a}V12" stroke="#000"/>`;
    if (big) s += vertical
      ? `<text transform="translate(8 ${p + 2}) rotate(-90)" text-anchor="end">${mm}</text>`
      : `<text x="${p + 2}" y="8">${mm}</text>`;
  }
  s += vertical ? `<path d="M0 ${cursor}.5H12" stroke="#f00"/>` : `<path d="M${cursor}.5 0V12" stroke="#f00"/>`;
  document.getElementById(id).innerHTML = s;
}
fill('hruler', 60, -20, 318, false, 146);
fill('vruler', 40, -16, 226, true, 1);
</script>
</body>
</html>
